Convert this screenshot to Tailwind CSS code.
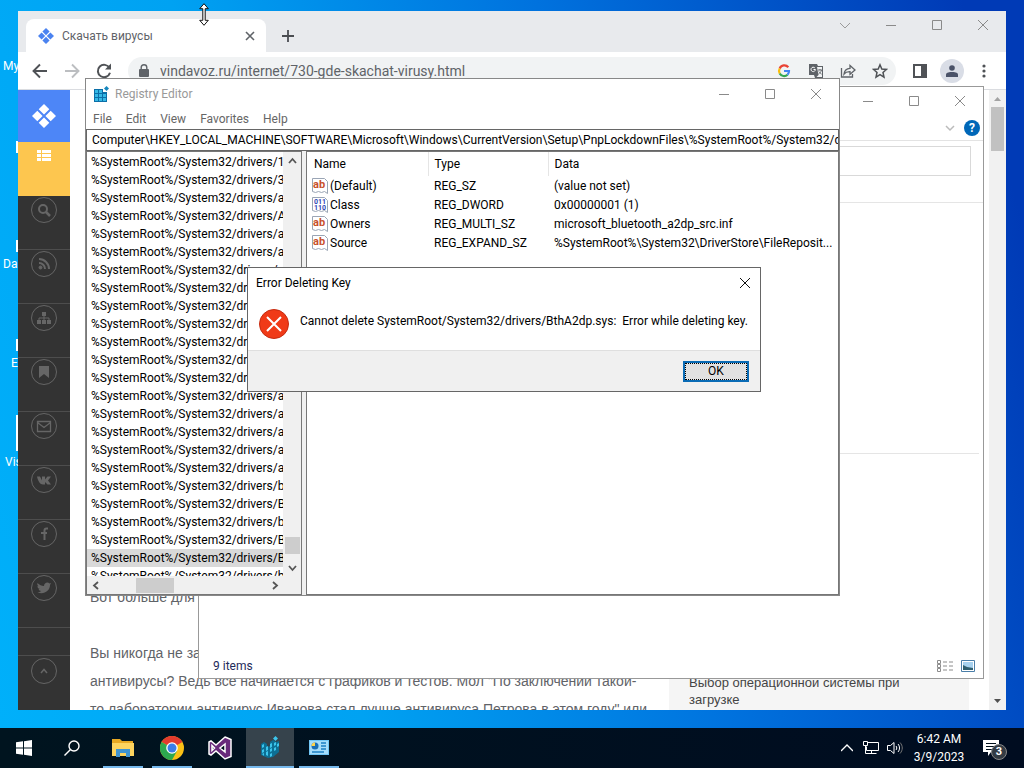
<!DOCTYPE html>
<html lang="en">
<head>
  <meta charset="UTF-8">
  <title>Desktop</title>
  <script src="https://cdn.jsdelivr.net/npm/@tailwindcss/browser@4"></script>
</head>
<body class="h-screen overflow-hidden flex flex-col font-['Roboto','Open_Sans',sans-serif] text-[12px] leading-4 text-black">

  <!-- Desktop -->
  <main class="relative flex-1 overflow-hidden bg-[linear-gradient(75deg,#00b0fa,#00a2f2_30%,#0072de_60%,#003ab6_95%)]">
    <!-- Desktop icons, mostly behind the browser -->
    <span class="absolute left-[3px] top-[58px] text-white">My</span>
    <span class="absolute left-[3px] top-[256px] text-white">Da</span>
    <span class="absolute left-[11px] top-[355px] text-white">E</span>
    <span class="absolute left-[5px] top-[454px] text-white">Vis</span>
    <i class="absolute left-4 top-[141px] h-3 w-1 bg-white"></i>
    <i class="absolute left-4 top-[240px] h-3 w-1 bg-white"></i>
    <i class="absolute left-4 top-[339px] h-3 w-1 bg-white"></i>
    <i class="absolute left-4 top-[415px] h-9 w-1 bg-white"></i>

    <!-- Browser window -->
    <section class="absolute left-[18px] right-[18px] top-[11px] bottom-[18px] flex flex-col bg-white text-[#5f6368]">
      <header class="h-[41px] shrink-0 flex items-end justify-between bg-[#e8eaed]">
        <div class="flex items-center pl-2 gap-4">
          <div class="w-[240px] h-[33px] rounded-t-lg bg-white flex items-center pl-3 pr-2">
            <svg class="w-4 h-4 mr-2" viewBox="0 0 16 16" fill="#4b83f0"><path d="M8 0l3.600 3.600L8 7.200 4.400 3.600zM3.600 4.400L7.200 8l-3.600 3.600L0 8zM12.400 4.400L16 8l-3.600 3.600L8.800 8zM8 8.800l3.600 3.600L8 16l-3.600-3.600z"/></svg>
            <span class="flex-1">Скачать вирусы</span>
            <button aria-label="Close tab" class="w-4 h-4"><svg viewBox="0 0 16 16" stroke="#5f6368" stroke-width="1.600"><path d="M4 4l8 8M12 4l-8 8"/></svg></button>
          </div>
          <button aria-label="New tab" class="w-3 h-3"><svg viewBox="0 0 12 12" stroke="#4a4d51" stroke-width="1.800"><path d="M6 0v12M0 6h12"/></svg></button>
        </div>
        <div class="self-start flex pt-2 pr-[17px] gap-[34px]">
          <button aria-label="Search tabs" class="w-3 h-3"><svg viewBox="0 0 12 12" fill="none" stroke="#9a9a9a"><path d="M1 4l5 5 5-5"/></svg></button>
          <button aria-label="Minimize" class="w-3 h-3"><svg viewBox="0 0 12 12" stroke="#8a8a8a"><path d="M1 6.500h10"/></svg></button>
          <button aria-label="Maximize" class="w-3 h-3"><svg viewBox="0 0 12 12" fill="none" stroke="#8a8a8a"><path d="M1.500 1.500h9v9h-9z"/></svg></button>
          <button aria-label="Close" class="w-3 h-3"><svg viewBox="0 0 12 12" stroke="#8a8a8a"><path d="M1 1l10 10M11 1L1 11"/></svg></button>
        </div>
      </header>

      <div class="h-[38px] shrink-0 flex items-center pl-[14px] pr-[10px] border-b border-[#dadce0]">
        <div class="flex gap-4 mr-4">
          <button aria-label="Back" class="w-4 h-4"><svg viewBox="0 0 16 16" fill="none" stroke="#4f5256" stroke-width="1.900"><path d="M15 8H2M8 1.500L1.500 8 8 14.500"/></svg></button>
          <button aria-label="Forward" class="w-4 h-4"><svg viewBox="0 0 16 16" fill="none" stroke="#bcbec1" stroke-width="1.900"><path d="M1 8h13M8 1.500L14.500 8 8 14.500"/></svg></button>
          <button aria-label="Reload" class="w-4 h-4"><svg viewBox="0 0 16 16" fill="none" stroke="#4f5256" stroke-width="2"><path d="M13.500 5A6.200 6.200 0 1 0 14 9.800"/><path d="M15 .5v6H9z" fill="#4f5256" stroke="none"/></svg></button>
        </div>
        <form class="flex-1 h-7 mr-3 rounded-full bg-[#f1f3f4] flex items-center px-2 gap-2">
          <svg class="w-4 h-4" viewBox="0 0 16 16" fill="#5f6368"><path d="M4 6h8a1 1 0 0 1 1 1v6a1 1 0 0 1-1 1H4a1 1 0 0 1-1-1V7a1 1 0 0 1 1-1z"/><path d="M5.200 6V4.500a2.800 2.800 0 0 1 5.600 0V6" fill="none" stroke="#5f6368" stroke-width="1.400"/></svg>
          <input aria-label="Address" class="flex-1 min-w-0 text-[14px] outline-none" value="vindavoz.ru/internet/730-gde-skachat-virusy.html">
          <div class="flex items-center gap-4">
            <svg class="w-4 h-4" viewBox="0 0 16 16" fill="none" stroke-width="2.200"><path d="M12.300 4.200A5 5 0 0 0 3.700 5.500" stroke="#ea4335"/><path d="M3.700 5.500a5 5 0 0 0 0 5" stroke="#fbbc05"/><path d="M3.700 10.500a5 5 0 0 0 7.800 1.200" stroke="#34a853"/><path d="M8 8h5a5 5 0 0 1-1.500 3.700" stroke="#4285f4"/></svg>
            <svg class="w-4 h-4" viewBox="0 0 16 16"><path d="M1 1h8l1 2h5v12H7l-1-3H1z" fill="#5f6368"/><path d="M9 4h5v10H8.500l2-2z" fill="#f1f3f4"/><path d="M6.800 4.900A2.200 2.200 0 1 0 7.400 6.500H5.500" fill="none" stroke="#fff"/><path d="M10 7h4M12 6v1M13.500 7c-.5 2-1.500 3-3 4M10.800 8.500l3 3" fill="none" stroke="#5f6368" stroke-width=".9"/></svg>
            <svg class="w-4 h-4" viewBox="0 0 16 16" fill="none" stroke="#5f6368" stroke-width="1.300"><path d="M1.500 5v9h11v-3M4 11c.4-3.800 2.600-5.500 6-5.700V2.500L15 7l-5 4.300V8.600C7.500 8.500 5.500 9 4 11z"/></svg>
            <svg class="w-4 h-4" viewBox="0 0 16 16" fill="none" stroke="#4f5256" stroke-width="1.500"><path d="M8 1.800l1.800 4.200 4.700.4-3.500 3.100 1 4.600-4-2.400-4 2.400 1-4.600L1.500 6.400 6.200 6z"/></svg>
          </div>
        </form>
        <div class="flex gap-2">
          <button aria-label="Side panel" class="w-6 h-6 p-1"><svg viewBox="0 0 16 16" fill="#4f5256"><path d="M1 1h14v14H1zM3 3v10h6V3z" fill-rule="evenodd"/></svg></button>
          <button aria-label="Profile" class="w-6 h-6 rounded-full bg-[#d9dde6] p-[6px]"><svg viewBox="0 0 12 12" fill="#4a5268"><circle cx="6" cy="3" r="2.800"/><path d="M0 12V9.500C0 7.500 4 7 6 7s6 .5 6 2.500V12z"/></svg></button>
          <button aria-label="Menu" class="w-6 h-6 p-1"><svg viewBox="0 0 16 16" fill="#4f5256"><circle cx="8" cy="3" r="1.600"/><circle cx="8" cy="8" r="1.600"/><circle cx="8" cy="13" r="1.600"/></svg></button>
        </div>
      </div>

      <!-- Page -->
      <div class="flex-1 min-h-0 flex overflow-hidden">
        <nav class="w-[52px] shrink-0 bg-[#333] flex flex-col">
          <a href="#" aria-label="Home" class="h-[52px] shrink-0 bg-[#4d86f7] flex items-center justify-center"><svg class="w-[26px] h-[26px]" viewBox="0 0 26 26" fill="#fff"><path d="M13 1l5.300 5.300L13 11.600 7.700 6.300zM6.300 7.700l5.300 5.300-5.300 5.300L1 13zM19.700 7.700L25 13l-5.300 5.300-5.300-5.300zM13 14.400l5.300 5.300L13 25l-5.300-5.300z"/></svg></a>
          <a href="#" aria-label="Categories" class="h-[54px] shrink-0 bg-[#fdc64f] flex justify-center pt-2"><svg class="w-4 h-3" viewBox="0 0 16 12" fill="#fff"><path d="M1 0h4v3H1zM6 0h9v3H6zM1 4h4v3H1zM6 4h9v3H6zM1 8h4v3H1zM6 8h9v3H6z"/></svg></a>
          <div id="side-links"></div>
          <div class="h-7 shrink-0 border-b border-[#4d4d4d]"></div>
          <a href="#" aria-label="Up" class="pt-[2px] flex justify-center"><svg class="w-[26px] h-[26px]" viewBox="0 0 26 26" fill="none" stroke="#666"><circle cx="13" cy="13" r="12.500"/><path d="M10 15l3-3.500 3 3.500" stroke-width="1.500"/></svg></a>
        </nav>
        <article class="flex-1 min-w-0 flex flex-col justify-end pl-5 font-['Liberation_Sans',Arial,sans-serif] text-[14px] leading-7 whitespace-nowrap">
          <div class="flex items-end -mb-[13px]">
            <div class="w-[579px] shrink-0">
              <p class="mb-7">Вот больше для</p>
              <p>Вы никогда не за</p>
              <p>антивирусы? Ведь все начинается с графиков и тестов. Мол "По заключении такой-</p>
              <p>то лаборатории антивирус Иванова стал лучше антивируса Петрова в этом году" или</p>
            </div>
            <aside class="mb-[13px] w-[300px] h-12 bg-[#f5f5f5] pl-5 pt-3 text-[13px] leading-[17px] text-[#444]">
              Выбор операционной системы при<br>загрузке
            </aside>
          </div>
        </article>
        <!-- Scrollbar -->
        <div class="w-[17px] shrink-0 bg-[#f1f1f1] flex flex-col items-center">
          <svg class="w-[17px] h-[17px]" viewBox="0 0 17 17" fill="#a3a3a3"><path d="M5 11l3.500-4 3.500 4z"/></svg>
          <i class="w-[13px] h-[44px] bg-[#c1c1c1]"></i>
          <svg class="w-[17px] h-[17px] mt-auto" viewBox="0 0 17 17" fill="#505050"><path d="M5 6l3.500 4L12 6z"/></svg>
        </div>
      </div>
    </section>

    <!-- File explorer window -->
    <section class="absolute left-[198px] right-[40px] top-[86px] bottom-[49px] border border-[#999] bg-white flex flex-col">
      <header class="flex justify-end gap-[34px] pt-2 pr-[17px]">
        <button aria-label="Minimize" class="w-3 h-3"><svg viewBox="0 0 12 12" stroke="#8a8a8a"><path d="M1 6.500h10"/></svg></button>
        <button aria-label="Maximize" class="w-3 h-3"><svg viewBox="0 0 12 12" fill="none" stroke="#8a8a8a"><path d="M1.500 1.500h9v9h-9z"/></svg></button>
        <button aria-label="Close" class="w-3 h-3"><svg viewBox="0 0 12 12" stroke="#8a8a8a"><path d="M1 1l10 10M11 1L1 11"/></svg></button>
      </header>
      <div class="h-[34px] flex items-end justify-end gap-2 pr-[3px] pb-1 border-b border-[#e3e3e3]">
        <svg class="w-3 h-4" viewBox="0 0 12 16" fill="none" stroke="#bbb" stroke-width="1.500"><path d="M2 6l4 4 4-4"/></svg>
        <button aria-label="Help" class="w-4 h-4 rounded-full bg-[#0067b8] text-white font-bold">?</button>
      </div>
      <div class="h-[62px] border-b border-[#e5e5e5] pt-[5px] pr-3">
        <input aria-label="Search" class="block ml-auto w-[140px] h-[30px] border border-[#d9d9d9]">
      </div>
      <div class="h-[251px] mx-1 border-b border-[#e5e5e5]"></div>
      <footer class="mt-auto flex items-center justify-between h-6 pl-[14px] pr-2 text-[#1e2a5a]">
        <span>9 items</span>
        <span class="flex gap-2">
          <svg class="w-4 h-3" viewBox="0 0 16 12" fill="none" stroke="#8c8c8c"><path d="M.5.5h3v3h-3zM.5 4.500h3v3h-3zM.5 8.500h3v3h-3zM6 2h4M12 2h4M6 6h4M12 6h4M6 10h4M12 10h4"/></svg>
          <svg class="w-[14px] h-3" viewBox="0 0 14 12"><path d="M.5.5h13v11H.5z" fill="#fff" stroke="#4a7ea8"/><path d="M2 2h10v8H2z" fill="#a7d1ee"/><path d="M2 5l4 2 6 1v2H2z" fill="#2f5e6e"/></svg>
        </span>
      </footer>
    </section>

    <!-- Registry Editor window -->
    <section class="absolute left-[85px] top-[78px] w-[755px] h-[518px] border border-[#888] bg-white flex flex-col">
      <header class="h-[30px] shrink-0 flex items-center justify-between pl-[7px] pr-[17px] text-[#999]">
        <div class="flex items-center gap-1">
          <svg class="w-[18px] h-4" viewBox="0 0 18 16"><path d="M1 3h9v3h4v10H1z" fill="#0b6fa8"/><path d="M2 4h3v3H2zM6 4h3v3H6zM2 8h3v3H2zM6 8h3v3H6zM10 8h3v3h-3zM2 12h3v3H2zM6 12h3v3H6zM10 12h3v3h-3z" fill="#35b9e6"/><path d="M13.500 0l2.500 2.500L13.500 5 11 2.500z" fill="#1687bd"/></svg>
          <h1>Registry Editor</h1>
        </div>
        <div class="flex gap-[34px]">
          <button aria-label="Minimize" class="w-3 h-3"><svg viewBox="0 0 12 12" stroke="#8a8a8a"><path d="M1 6.500h10"/></svg></button>
          <button aria-label="Maximize" class="w-3 h-3"><svg viewBox="0 0 12 12" fill="none" stroke="#8a8a8a"><path d="M1.500 1.500h9v9h-9z"/></svg></button>
          <button aria-label="Close" class="w-3 h-3"><svg viewBox="0 0 12 12" stroke="#8a8a8a"><path d="M1 1l10 10M11 1L1 11"/></svg></button>
        </div>
      </header>
      <nav class="h-5 shrink-0 flex items-center gap-[14px] pl-[7px] text-[#666]">
        <button>File</button><button>Edit</button><button>View</button><button>Favorites</button><button>Help</button>
      </nav>
      <input aria-label="Path" class="h-[22px] shrink-0 border border-[#666] pl-[5px] outline-none" value="Computer\HKEY_LOCAL_MACHINE\SOFTWARE\Microsoft\Windows\CurrentVersion\Setup\PnpLockdownFiles\%SystemRoot%/System32/drivers/BthA2dp.sys">
      <div class="flex-1 min-h-0 flex gap-1 bg-[#f0f0f0]">
        <!-- Key tree -->
        <div class="w-[216px] shrink-0 border border-[#777] bg-white flex flex-col">
          <div class="flex-1 min-h-0 flex">
            <ul id="tree" class="flex-1 min-w-0 pt-px overflow-hidden whitespace-nowrap"></ul>
            <div class="w-[18px] shrink-0 bg-[#f0f0f0] flex flex-col items-center">
              <svg class="w-[17px] h-[17px]" viewBox="0 0 17 17" fill="none" stroke="#555" stroke-width="1.800"><path d="M5 11l3.500-4 3.500 4"/></svg>
              <i class="mt-auto w-[15px] h-[17px] bg-[#cdcdcd]"></i>
              <svg class="w-[17px] h-[22px]" viewBox="0 0 17 22" fill="none" stroke="#555" stroke-width="1.800"><path d="M5 12l3.500 4 3.500-4"/></svg>
            </div>
          </div>
          <div class="h-[18px] shrink-0 bg-[#f0f0f0] flex items-center pr-[17px]">
            <svg class="w-[17px] h-[17px]" viewBox="0 0 17 17" fill="none" stroke="#555" stroke-width="1.800"><path d="M11 5L7 8.500l4 3.500"/></svg>
            <i class="ml-8 w-[38px] h-[15px] bg-[#cdcdcd]"></i>
            <svg class="w-[17px] h-[17px] ml-auto" viewBox="0 0 17 17" fill="none" stroke="#555" stroke-width="1.800"><path d="M6 5l4 3.500L6 12"/></svg>
          </div>
        </div>
        <!-- Values -->
        <div class="flex-1 min-w-0 border border-[#777] bg-white">
          <table class="w-full table-fixed text-left whitespace-nowrap">
            <thead>
              <tr class="h-6">
                <th class="w-[121px] pl-[7px] font-normal border-r border-[#e5e5e5]">Name</th>
                <th class="w-[120px] pl-[6px] font-normal border-r border-[#e5e5e5]">Type</th>
                <th class="pl-[6px] font-normal">Data</th>
              </tr>
            </thead>
            <tbody id="values"></tbody>
          </table>
        </div>
      </div>
    </section>

    <!-- Error dialog -->
    <section role="alertdialog" aria-labelledby="dialog-title" class="absolute left-[247px] top-[267px] w-[514px] h-[125px] border border-[#666] bg-white flex flex-col">
      <header class="h-[30px] flex items-center justify-between pl-2 pr-[9px]">
        <h2 id="dialog-title">Error Deleting Key</h2>
        <button aria-label="Close" class="w-3 h-3"><svg viewBox="0 0 12 12" stroke="#111"><path d="M1 1l10 10M11 1L1 11"/></svg></button>
      </header>
      <div class="flex-1 flex items-start gap-[11px] pl-[11px] pt-[11px]">
        <svg class="w-[30px] h-[30px] shrink-0" viewBox="0 0 30 30"><circle cx="15" cy="15" r="14.500" fill="#f03a17" stroke="#c52b10"/><path d="M8 8l14 14M22 8L8 22" stroke="#fff" stroke-width="2"/></svg>
        <p class="pt-1 whitespace-pre">Cannot delete SystemRoot/System32/drivers/BthA2dp.sys:  Error while deleting key.</p>
      </div>
      <footer class="h-[41px] flex items-center justify-end pr-[11px] bg-[#f0f0f0] border-t border-[#dfdfdf]">
        <button class="w-[66px] h-[21px] border-2 border-[#0a6bb5] bg-[#e1e1e1] outline-1 -outline-offset-3 outline-dotted outline-black">OK</button>
      </footer>
    </section>

    <!-- Mouse cursor -->
    <svg class="absolute left-[197px] top-[3px] w-[14px] h-[23px]" viewBox="0 0 14 23" fill="#fff" stroke="#111"><path d="M7 .7l4.300 5H8.200v11.600h3.100L7 22.300l-4.300-5h3.100V5.700H2.700z"/></svg>
  </main>

  <!-- Taskbar -->
  <footer class="h-10 shrink-0 flex items-stretch justify-between bg-linear-to-r from-[#00141f] to-[#000c20] text-white">
    <div class="flex">
      <button aria-label="Start" class="w-12 flex items-center justify-center"><svg class="w-4 h-4" viewBox="0 0 16 16" fill="#fff"><path d="M0 2.300L7 1.300V7.500H0zM8 1.200L16 0v7.500H8zM0 8.500h7v6.200l-7-1zM8 8.500h8V16l-8-1.200z"/></svg></button>
      <button aria-label="Search" class="w-12 flex items-center justify-center"><svg class="w-4 h-4" viewBox="0 0 16 16" fill="none" stroke="#fff" stroke-width="1.400"><circle cx="10" cy="6" r="5"/><path d="M6.500 9.500L.5 15.500"/></svg></button>
      <button aria-label="File Explorer" class="w-[54px] px-[7px] flex flex-col items-center justify-between pt-[10px]"><svg class="w-[22px] h-5" viewBox="0 0 22 20"><path d="M0 1h8l2 2h11v15H0z" fill="#e8a923"/><path d="M0 5h22v13H0z" fill="#fdd45f"/><path d="M4 19v-8h14v8h-4v-4H8v4z" fill="#3f94d1"/></svg><i class="w-10 h-[2px] bg-[#76b9ed]"></i></button>
      <button aria-label="Chrome" class="w-11 flex flex-col items-center justify-between pt-2"><svg class="w-6 h-6" viewBox="0 0 24 24"><circle cx="12" cy="12" r="12" fill="#fbc116"/><path d="M12 12L1.600 6A12 12 0 0 1 22.400 6z" fill="#e33b2e"/><path d="M1.600 6A12 12 0 0 0 12 24l5-9-5-3z" fill="#2da94f"/><circle cx="12" cy="12" r="5.800" fill="#fff"/><circle cx="12" cy="12" r="4.500" fill="#3b7de9"/></svg><i class="w-10 h-[2px] bg-[#76b9ed]"></i></button>
      <button aria-label="Visual Studio" class="w-[52px] flex items-center justify-center"><svg class="w-6 h-6" viewBox="0 0 24 24"><path d="M17 1l6 2.500v17L17 23 8 15l-5 4-2-1V6l2-1 5 4zM17 8l-5 4 5 4zM4 9.500v5L6.500 12z" fill="#682a7b" stroke="#fff" stroke-width="1.500" fill-rule="evenodd"/></svg></button>
      <button aria-label="Registry Editor" class="w-12 bg-[#36434c] flex flex-col items-center justify-between pt-2"><svg class="w-5 h-6" viewBox="0 0 20 24"><path d="M1 8l3-2 3 2v3l3-1V6l3-2 3 2 3-1v11l-6 5-5 1-7-3z" fill="#0d6f94"/><path d="M15.500 0L18 2.500 15.500 5 13 2.500z" fill="#3cc5ec"/><path d="M2 9l2-1v3l-2 1zM6 11l2-1v4l-2 1zM10 8l2-1v4l-2 1zM14 7l2-1v3l-2 1zM14 12l2-1v3l-2 1zM2 14l2-1v3l-2 1zM6 16l2-1v5l-2-1zM10 13l2-1v3l-2 1zM10 18l2-1v3l-2 1zM17 8l2-1v3l-2 1zM2 18l2-1v3z" fill="#3cc5ec"/></svg><i class="w-12 h-[2px] bg-[#76b9ed]"></i></button>
      <button aria-label="Control Panel" class="w-[50px] flex flex-col items-center justify-between pt-3"><svg class="w-5 h-4" viewBox="0 0 20 16"><path d="M0 0h20v15H0z" fill="#71c6f5"/><path d="M1 1h18v13H1z" fill="#a5ddfb"/><circle cx="6" cy="6" r="3.500" fill="#1b6fb5"/><path d="M6 6V2.500A3.500 3.500 0 0 0 2.500 6z" fill="#ffd34a"/><path d="M12 3h5M12 6h5M12 9h5M3 12h12" stroke="#1b7fc4" stroke-width="1.500"/></svg><i class="w-10 h-[2px] bg-[#76b9ed]"></i></button>
    </div>
    <div class="flex items-center pr-[17px]">
      <svg class="w-3 h-3 mr-[10px]" viewBox="0 0 12 12" fill="none" stroke="#fff" stroke-width="1.400"><path d="M0 9l6-6 6 6"/></svg>
      <svg class="w-4 h-4 mr-2" viewBox="0 0 16 16" fill="none" stroke="#fff"><path d="M4.500 2.500h11v8h-12v-4M.5 1.500h4v4h-4zM2.500 5.500v8h11M8.500 10.500v3"/></svg>
      <svg class="w-4 h-4 mr-[10px]" viewBox="0 0 16 16" fill="none" stroke="#fff"><path d="M.5 5.500h3L7 2.500v11l-3.500-3h-3zM9 6c1 1.200 1 2.800 0 4M11 4c2 2.300 2 5.700 0 8"/><path d="M13 2.500c3 3.300 3 7.700 0 11" stroke="#777"/></svg>
      <div class="w-[52px] mr-[18px] text-center leading-[18px] whitespace-nowrap"><p>6:42 AM</p><p>3/9/2023</p></div>
      <button aria-label="Notifications" class="relative w-6 h-6">
        <svg class="w-4 h-4" viewBox="0 0 16 16"><path d="M0 0h16v12H8l-3 4v-4H0z" fill="#fff"/><path d="M3 3.500h10M3 6.500h10M3 9.500h7" stroke="#00101c"/></svg>
        <span class="absolute left-2 top-2 w-4 h-4 rounded-full border border-[#888] bg-[#333b44] text-[11px] leading-[14px] font-bold text-center">3</span>
      </button>
    </div>
  </footer>

  <script>
    // Registry keys in the tree
    const keys = ['1394ohci.sys', '3ware.sys', 'acpi.sys', 'AcpiDev.sys', 'acpiex.sys', 'acpipagr.sys', 'acpipmi.sys', 'acpitime.sys',
      'adp80xx.sys', 'afunix.sys', 'agilevpn.sys', 'ahcache.sys', 'amdgpio2.sys', 'arcsas.sys', 'arc.sys', 'armhid.sys', 'atapi.sys', 'ataport.sys',
      'bam.sys', 'BasicDisplay.sys', 'bcmfn2.sys', 'BtaMPM.sys', 'BthA2dp.sys', 'bthenum.sys'];
    const selected = 'BthA2dp.sys';

    const tree = document.getElementById('tree');
    keys.forEach(key => {
      const li = document.createElement('li');
      li.className = key === selected ? 'h-[18px] pl-1 leading-[18px] bg-[#d9d9d9]' : 'h-[18px] pl-1 leading-[18px]';
      li.textContent = '%SystemRoot%/System32/drivers/' + key;
      tree.appendChild(li);
    });

    // Registry values
    const stringIcon = '<svg class="w-4 h-4 shrink-0" viewBox="0 0 16 16"><path d="M.5.5h12l3 3v12l-3-2-3 1-3-1-3 1-3-1z" fill="#fff" stroke="#9aa5b5"/><text x="1" y="10" font-size="11" font-weight="bold" fill="#c8502c">ab</text></svg>';
    const binaryIcon = '<svg class="w-4 h-4 shrink-0" viewBox="0 0 16 16"><path d="M.5.5h12l3 3v12l-3-2-3 1-3-1-3 1-3-1z" fill="#fff" stroke="#9aa5b5"/><text x="2" y="7" font-size="7" font-weight="bold" fill="#2f46b5">011</text><text x="2" y="13" font-size="7" font-weight="bold" fill="#2f46b5">110</text></svg>';
    const values = [
      ['(Default)', 'REG_SZ', '(value not set)', stringIcon],
      ['Class', 'REG_DWORD', '0x00000001 (1)', binaryIcon],
      ['Owners', 'REG_MULTI_SZ', 'microsoft_bluetooth_a2dp_src.inf', stringIcon],
      ['Source', 'REG_EXPAND_SZ', '%SystemRoot%\\System32\\DriverStore\\FileReposit...', stringIcon]
    ];
    document.getElementById('values').innerHTML = values.map(([name, type, data, icon]) => `
      <tr class="h-[19px]">
        <td class="pl-[5px]"><div class="flex items-center gap-[2px]">${icon}<span>${name}</span></div></td>
        <td class="pl-[6px]">${type}</td>
        <td class="pl-[6px]">${data}</td>
      </tr>`).join('');

    // Sidebar links of the page
    const links = [
      ['Search', '<circle cx="12" cy="12" r="4" stroke-width="2"/><path d="M15 15l4 4" stroke-width="2.500"/>'],
      ['RSS', '<path d="M8 8a10 10 0 0 1 10 10M8 12a6 6 0 0 1 6 6" stroke-width="2"/><circle cx="9.500" cy="16.500" r="1.500" fill="#666"/>'],
      ['Site map', '<path d="M11 7h4v4h-4zM6 15h4v4H6zM11 15h4v4h-4zM16 15h4v4h-4z" fill="#666" stroke="none"/><path d="M13 11v4M8 15v-2h10v2"/>'],
      ['Bookmarks', '<path d="M8 7h10v12l-5-4-5 4z" fill="#666" stroke="none"/>'],
      ['Mail', '<path d="M6.500 8.500h13v10h-13zM6.500 9.500l6.500 5 6.500-5" stroke-width="1.300"/>'],
      ['VK', '<path d="M6 9.500h3l2 4v-4h3v3l2.500-3H20l-3 4 3 4h-3.500L14 15v2.500h-2C9 17.500 7 14 6 9.500z" fill="#666" stroke="none"/>'],
      ['Facebook', '<path d="M17 7.500h-1.500c-1.500 0-2 .8-2 2V19M10 12h6" stroke-width="2"/>'],
      ['Twitter', '<path d="M6.500 8c2 2 4 3 6.500 3 0-3 3.500-4.500 5.500-2.500L20 8l-1 2c0 6-6.500 10-12.500 7.300 1.500 0 2.700-.4 3.700-1.200-1.500 0-2.300-1-2.600-2h1.200C7 13.500 6.500 12.500 6.500 11l1 .3C6.300 10.400 6 9.300 6.500 8z" fill="#666" stroke="none"/>']
    ];
    document.getElementById('side-links').innerHTML = links.map(([label, icon]) => `
      <a href="#" aria-label="${label}" class="h-[54px] border-b border-[#4d4d4d] pt-px flex justify-center">
        <svg class="w-[26px] h-[26px]" viewBox="0 0 26 26" fill="none" stroke="#666"><circle cx="13" cy="13" r="12.500"/>${icon}</svg>
      </a>`).join('');
  </script>
</body>
</html>
